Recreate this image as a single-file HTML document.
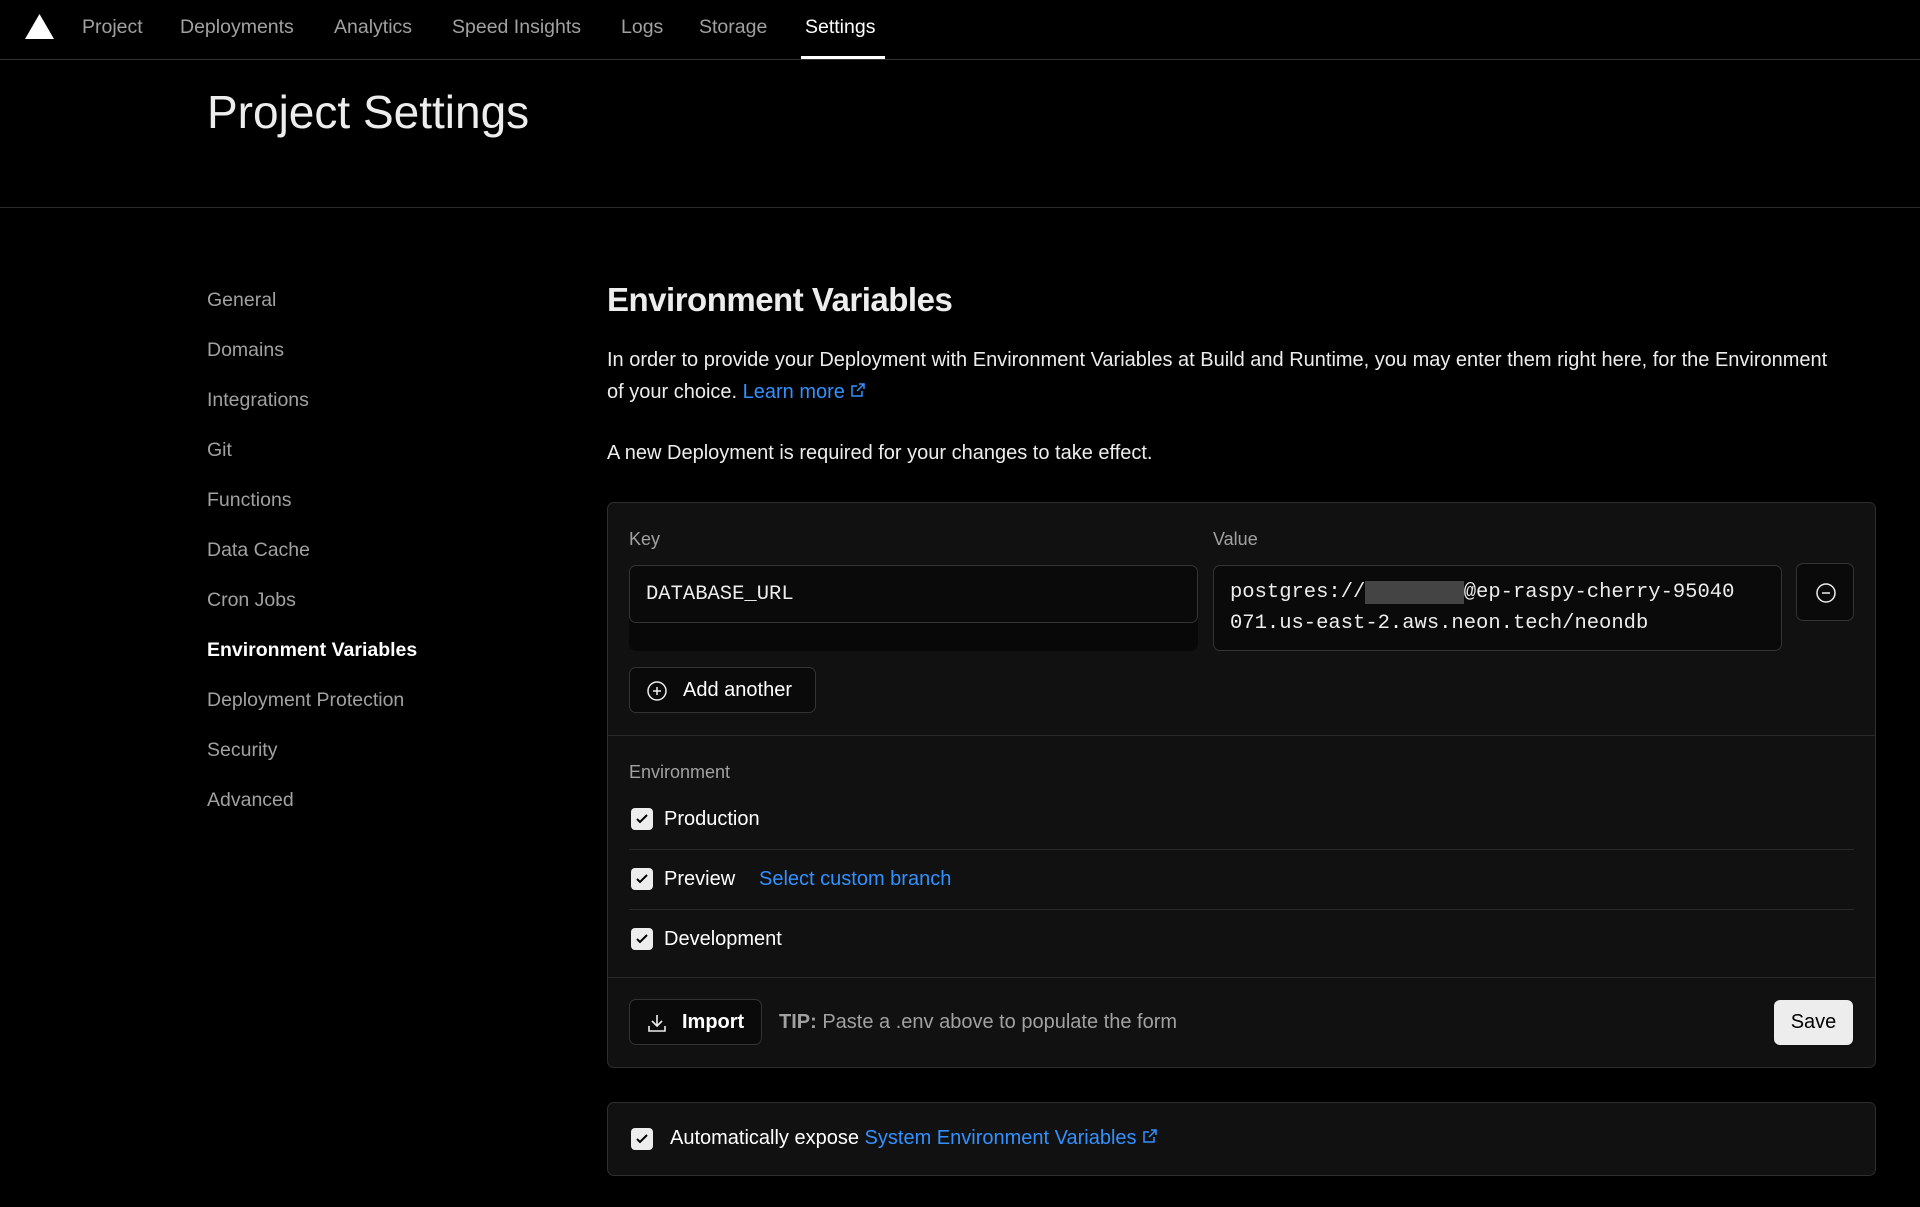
<!DOCTYPE html>
<html><head><meta charset="utf-8"><style>
*{box-sizing:border-box;margin:0;padding:0}
body{width:1920px;height:1207px;background:#000;color:#ededed;font-family:"Liberation Sans",sans-serif;position:relative;overflow:hidden}
.a{position:absolute;white-space:nowrap}
.nav{font-size:19.5px;color:#a1a1a1;top:16px}
.side{font-size:19.5px;color:#a1a1a1;left:207px}
.t{font-size:20px}
.mono{font-family:"Liberation Mono",monospace;font-size:20.5px;color:#ededed}
.cb{position:absolute;width:22px;height:22px;background:#ededed;border-radius:4px}
.cb svg{position:absolute;left:3px;top:3px}
.btn{position:absolute;border:1px solid #333;border-radius:7px;background:#0a0a0a}
.link{color:#3291ff}
</style></head><body>
<svg class="a" style="left:25px;top:14px" width="29" height="25" viewBox="0 0 29 25"><path d="M14.5 0L29 25H0z" fill="#fff"/></svg>
<div class="a nav" style="left:82px">Project</div>
<div class="a nav" style="left:180px">Deployments</div>
<div class="a nav" style="left:334px">Analytics</div>
<div class="a nav" style="left:452px">Speed Insights</div>
<div class="a nav" style="left:621px">Logs</div>
<div class="a nav" style="left:699px">Storage</div>
<div class="a nav" style="left:805px;color:#fff">Settings</div>
<div class="a" style="left:0;top:59px;width:1920px;height:1px;background:#333"></div>
<div class="a" style="left:801px;top:56px;width:84px;height:3px;background:#fff"></div>
<div class="a" style="left:207px;top:85px;font-size:46px;color:#ededed">Project Settings</div>
<div class="a" style="left:0;top:207px;width:1920px;height:1px;background:#2a2a2a"></div>

<div class="a side" style="top:289px">General</div>
<div class="a side" style="top:339px">Domains</div>
<div class="a side" style="top:389px">Integrations</div>
<div class="a side" style="top:439px">Git</div>
<div class="a side" style="top:489px">Functions</div>
<div class="a side" style="top:539px">Data Cache</div>
<div class="a side" style="top:589px">Cron Jobs</div>
<div class="a side" style="top:639px;color:#fff;font-weight:bold">Environment Variables</div>
<div class="a side" style="top:689px">Deployment Protection</div>
<div class="a side" style="top:739px">Security</div>
<div class="a side" style="top:789px">Advanced</div>

<div class="a" style="left:607px;top:281px;font-size:33px;font-weight:bold;color:#ededed;letter-spacing:-0.5px">Environment Variables</div>
<div class="a t" style="left:607px;top:344px;line-height:32px;white-space:normal;width:1232px">In order to provide your Deployment with Environment Variables at Build and Runtime, you may enter them right here, for the Environment of your choice. <span class="link">Learn more</span> <svg width="16" height="16" viewBox="0 0 16 16" fill="none" stroke="#3291ff" stroke-width="1.5"><path d="M9 2h5v5M14 2L7 9M12 9v5H2V4h5"/></svg></div>
<div class="a t" style="left:607px;top:442px">A new Deployment is required for your changes to take effect.</div>

<div class="a" style="left:607px;top:502px;width:1269px;height:566px;background:#111;border:1px solid #2e2e2e;border-radius:7px"></div>
<div class="a" style="left:629px;top:529px;font-size:18px;color:#a1a1a1">Key</div>
<div class="a" style="left:1213px;top:529px;font-size:18px;color:#a1a1a1">Value</div>
<div class="a" style="left:629px;top:565px;width:569px;height:86px;background:#080808;border-radius:7px"></div>
<div class="a" style="left:629px;top:565px;width:569px;height:58px;background:#0a0a0a;border:1px solid #333;border-radius:7px"></div>
<div class="a mono" style="left:646px;top:583px">DATABASE_URL</div>
<div class="a" style="left:1213px;top:565px;width:569px;height:86px;background:#0a0a0a;border:1px solid #333;border-radius:7px"></div>
<div class="a mono" style="left:1230px;top:581px">postgres://<span style="background:#444;color:#444">xxxxxxxx</span>@ep-raspy-cherry-95040</div>
<div class="a mono" style="left:1230px;top:612px">071.us-east-2.aws.neon.tech/neondb</div>
<div class="btn" style="left:1796px;top:563px;width:58px;height:58px"><svg style="position:absolute;left:18px;top:18px" width="22" height="22" viewBox="0 0 22 22" fill="none" stroke="#ededed" stroke-width="1.5"><circle cx="11" cy="11" r="9"/><path d="M7 11h8"/></svg></div>
<div class="btn" style="left:629px;top:667px;width:187px;height:46px"><svg style="position:absolute;left:16px;top:12px" width="22" height="22" viewBox="0 0 22 22" fill="none" stroke="#ededed" stroke-width="1.5"><circle cx="11" cy="11" r="9"/><path d="M7 11h8M11 7v8"/></svg><span class="a" style="left:53px;top:11px;font-size:20px;color:#fff">Add another</span></div>
<div class="a" style="left:608px;top:735px;width:1267px;height:1px;background:#2a2a2a"></div>
<div class="a" style="left:629px;top:762px;font-size:18px;color:#a1a1a1">Environment</div>
<div class="cb" style="left:631px;top:808px"><svg width="16" height="16" viewBox="0 0 16 16" fill="none" stroke="#000" stroke-width="2"><path d="M3 8l3 3 7-7"/></svg></div>
<div class="a t" style="left:664px;top:808px;color:#fff">Production</div>
<div class="a" style="left:629px;top:849px;width:1225px;height:1px;background:#2a2a2a"></div>
<div class="cb" style="left:631px;top:868px"><svg width="16" height="16" viewBox="0 0 16 16" fill="none" stroke="#000" stroke-width="2"><path d="M3 8l3 3 7-7"/></svg></div>
<div class="a t" style="left:664px;top:868px;color:#fff">Preview</div>
<div class="a t link" style="left:759px;top:868px">Select custom branch</div>
<div class="a" style="left:629px;top:909px;width:1225px;height:1px;background:#2a2a2a"></div>
<div class="cb" style="left:631px;top:928px"><svg width="16" height="16" viewBox="0 0 16 16" fill="none" stroke="#000" stroke-width="2"><path d="M3 8l3 3 7-7"/></svg></div>
<div class="a t" style="left:664px;top:928px;color:#fff">Development</div>
<div class="a" style="left:608px;top:977px;width:1267px;height:1px;background:#2a2a2a"></div>
<div class="btn" style="left:629px;top:999px;width:133px;height:46px"><svg style="position:absolute;left:16px;top:12px" width="22" height="22" viewBox="0 0 22 22" fill="none" stroke="#ededed" stroke-width="1.6"><path d="M11 3v11M6 9l5 5 5-5M3 14v5h16v-5"/></svg><span class="a" style="left:52px;top:11px;font-size:20px;color:#fff;font-weight:bold">Import</span></div>
<div class="a t" style="left:779px;top:1011px;color:#a1a1a1"><b>TIP:</b> Paste a .env above to populate the form</div>
<div class="a" style="left:1774px;top:1000px;width:79px;height:45px;background:#ededed;border-radius:6px;color:#000;font-size:20px;text-align:center;line-height:45px">Save</div>

<div class="a" style="left:607px;top:1102px;width:1269px;height:74px;background:#111;border:1px solid #2e2e2e;border-radius:7px"></div>
<div class="cb" style="left:631px;top:1128px"><svg width="16" height="16" viewBox="0 0 16 16" fill="none" stroke="#000" stroke-width="2"><path d="M3 8l3 3 7-7"/></svg></div>
<div class="a t" style="left:670px;top:1127px;color:#fff">Automatically expose <span class="link">System Environment Variables</span> <svg width="16" height="16" viewBox="0 0 16 16" fill="none" stroke="#3291ff" stroke-width="1.5"><path d="M9 2h5v5M14 2L7 9M12 9v5H2V4h5"/></svg></div>
</body></html>
